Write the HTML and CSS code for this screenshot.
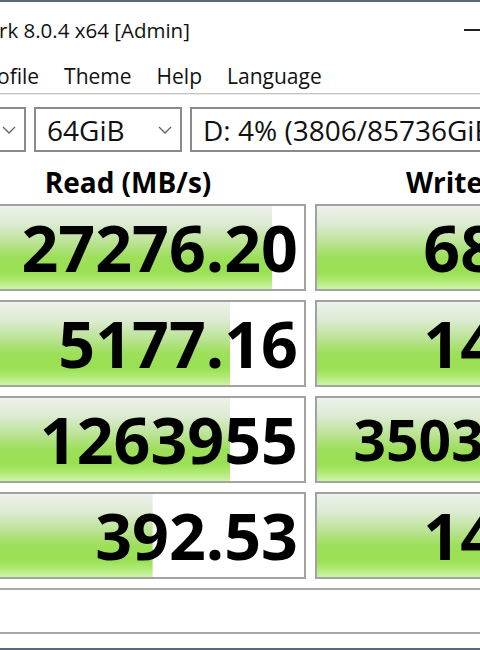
FILE: index.html
```html
<!DOCTYPE html>
<html lang="en">
<head>
  <meta charset="UTF-8">
  <title>CrystalDiskMark 8.0.4 x64 [Admin]</title>
  <link rel="stylesheet" href="styles.css">
</head>
<body>
  <div class="window">
    <div class="titlebar">
      <span class="title">rk 8.0.4 x64 [Admin]</span>
      <span class="minimize"></span>
    </div>

    <div class="menubar">
      <span class="menu-item first">ofile</span>
      <span class="menu-item">Theme</span>
      <span class="menu-item">Help</span>
      <span class="menu-item">Language</span>
    </div>

    <div class="toolbar">
      <div class="combo combo-count">
        <span class="combo-text"></span>
        <svg class="chevron" width="14" height="8" viewBox="0 0 14 8"><polyline points="1,1 7,7 13,1" fill="none" stroke="#666" stroke-width="1.4"/></svg>
      </div>
      <div class="combo combo-size">
        <span class="combo-text">64GiB</span>
        <svg class="chevron" width="14" height="8" viewBox="0 0 14 8"><polyline points="1,1 7,7 13,1" fill="none" stroke="#666" stroke-width="1.4"/></svg>
      </div>
      <div class="combo combo-drive">
        <span class="combo-text">D: 4% (3806/85736GiB)</span>
      </div>
    </div>

    <div class="results">
      <div class="col-head">Read (MB/s)</div>
      <div class="col-head">Write (MB/s)</div>

      <div class="cell" style="background-size: 91% 100%">27276.20</div>
      <div class="cell" style="background-size: 88% 100%">6852.31</div>

      <div class="cell" style="background-size: 79% 100%">5177.16</div>
      <div class="cell" style="background-size: 76% 100%">1432.87</div>

      <div class="cell" style="background-size: 79% 100%">1263955</div>
      <div class="cell long" style="background-size: 78% 100%">3503186.92</div>

      <div class="cell" style="background-size: 57% 100%">392.53</div>
      <div class="cell" style="background-size: 60% 100%">1428.64</div>
    </div>

    <div class="comment"></div>
  </div>
</body>
</html>
```

FILE: styles.css
```css
html, body {
  margin: 0;
  padding: 0;
  width: 480px;
  height: 650px;
  overflow: hidden;
  background: #ffffff;
}
body {
  font-family: "Open Sans", "Noto Sans", sans-serif;
  color: #000;
  border-top: 2px solid #58697b;
  box-sizing: border-box;
}
.window {
  display: flex;
  flex-direction: column;
  height: 648px;
  border-bottom: 2px solid #58697b;
  box-sizing: border-box;
}

/* title bar */
.titlebar {
  height: 56px;
  flex: none;
  display: flex;
  align-items: center;
  justify-content: space-between;
}
.title {
  font-size: 20.5px;
  color: #111;
  margin-left: -1px;
}
.minimize {
  width: 16px;
  height: 2px;
  background: #222;
}

/* menu */
.menubar {
  height: 35px;
  flex: none;
  display: flex;
  align-items: center;
  gap: 25px;
  font-size: 21px;
  color: #111;
  border-bottom: 1px solid #c4c4c4;
  box-shadow: 0 1px 0 #ececec;
}
.menu-item.first { margin-left: -3px; }

/* combo boxes */
.toolbar {
  display: flex;
  flex: none;
  gap: 8px;
  margin-top: 13px;
  height: 45px;
  margin-left: -35px;
}
.combo {
  flex: none;
  border: 2px solid #8a8a8a;
  box-sizing: border-box;
  height: 45px;
  display: flex;
  align-items: center;
  justify-content: space-between;
  padding: 0 8px 0 11px;
  font-size: 28px;
  color: #111;
  background: #fff;
  white-space: nowrap;
  overflow: hidden;
}
.combo-count { width: 61px; }
.combo-size { width: 148px; }
.combo-drive { width: 420px; }
.chevron { flex: none; }

/* results grid */
.results {
  display: grid;
  flex: none;
  grid-template-columns: 356px 356px;
  grid-template-rows: 43px repeat(4, 87px);
  column-gap: 9px;
  row-gap: 9px;
  margin-left: -50px;
}
.col-head {
  font-weight: 700;
  font-size: 28px;
  line-height: 1;
  text-align: center;
  white-space: nowrap;
  padding-top: 16px;
}
.cell {
  border: 2px solid #a2a2a2;
  box-sizing: border-box;
  display: flex;
  align-items: center;
  justify-content: flex-end;
  padding-right: 6px;
  font-weight: 700;
  font-size: 64.5px;
  line-height: 1;
  background-color: #fff;
  background-image: linear-gradient(to bottom,
    #eef1ec 0%, #dcebd2 22%, #b9e391 45%, #9ddf5a 62%,
    #99e052 80%, #b4ec7e 92%, #cdf3a8 100%);
  background-repeat: no-repeat;
}
.cell.long { font-size: 57px; }

/* comment box */
.comment {
  flex: none;
  margin-top: 9px;
  height: 42px;
  border-top: 2px solid #a8a8a8;
  border-bottom: 2px solid #a8a8a8;
}
```
